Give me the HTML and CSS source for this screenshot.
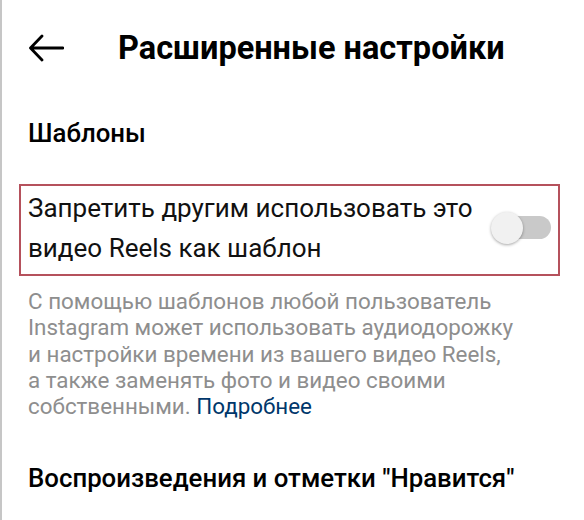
FILE: index.html
```html
<!DOCTYPE html>
<html lang="ru">
<head>
<meta charset="utf-8">
<title>Расширенные настройки</title>
<link rel="stylesheet" href="styles.css">
</head>
<body>
<div class="screen">
  <header class="topbar">
    <svg class="back" width="36" height="28" viewBox="0 0 36 28" aria-hidden="true">
      <path d="M35 14H3M14 2L2.5 14L14 26" fill="none" stroke="#000" stroke-width="2.8" stroke-linecap="round" stroke-linejoin="round"/>
    </svg>
    <h1 class="title">Расширенные настройки</h1>
  </header>

  <h2 class="section">Шаблоны</h2>

  <div class="option">
    <div class="option-text">Запретить другим использовать это<br>видео Reels как шаблон</div>
    <div class="switch"><span class="track"></span><span class="knob"></span></div>
  </div>

  <p class="desc">С помощью шаблонов любой пользователь<br>Instagram может использовать аудиодорожку<br>и настройки времени из вашего видео Reels,<br>а также заменять фото и видео своими<br>собственными. <a class="link" href="#">Подробнее</a></p>

  <h2 class="section section-2">Воспроизведения и отметки "Нравится"</h2>
</div>
</body>
</html>
```

FILE: styles.css
```css
html, body {
  margin: 0;
  padding: 0;
  background: #fff;
}
body {
  font-family: Roboto, "Noto Sans", "Liberation Sans", sans-serif;
  color: #000;
}
.screen {
  box-sizing: border-box;
  width: 584px;
  height: 520px;
  border-left: 2px solid #c6c6c6;
  overflow: hidden;
}
.topbar {
  display: flex;
  align-items: center;
  padding: 28px 0 0 26px;
  height: 40px;
}
.back {
  display: block;
  flex: none;
}
.title {
  margin: 0 0 0 54px;
  font-size: 32.5px;
  line-height: 40px;
  font-weight: 700;
  white-space: nowrap;
}
.section {
  margin: 50px 0 0 26px;
  font-size: 25.8px;
  line-height: 30px;
  font-weight: 500;
  white-space: nowrap;
}
.option {
  display: flex;
  align-items: center;
  justify-content: space-between;
  margin: 36px 0 0 17px;
  width: 541px;
  box-sizing: border-box;
  border: 2px solid #b5515c;
  padding: 2px 7px 6px 7px;
}
.option-text {
  font-size: 26px;
  line-height: 40px;
  color: #111;
  white-space: nowrap;
}
.switch {
  position: relative;
  width: 60px;
  height: 32px;
  flex: none;
}
.track {
  position: absolute;
  right: 0;
  top: 4px;
  width: 54px;
  height: 23px;
  border-radius: 12px;
  background: #c9c9c9;
}
.knob {
  position: absolute;
  left: 0;
  top: 0;
  width: 32px;
  height: 32px;
  border-radius: 50%;
  background: #f1f1f1;
  box-shadow: 0 1px 3px rgba(0,0,0,0.35);
}
.desc {
  margin: 12px 0 0 26px;
  font-size: 22.4px;
  line-height: 26.3px;
  color: #8e8e8e;
  white-space: nowrap;
}
.link {
  color: #00376b;
  text-decoration: none;
}
.section-2 {
  margin-top: 44px;
}
```
